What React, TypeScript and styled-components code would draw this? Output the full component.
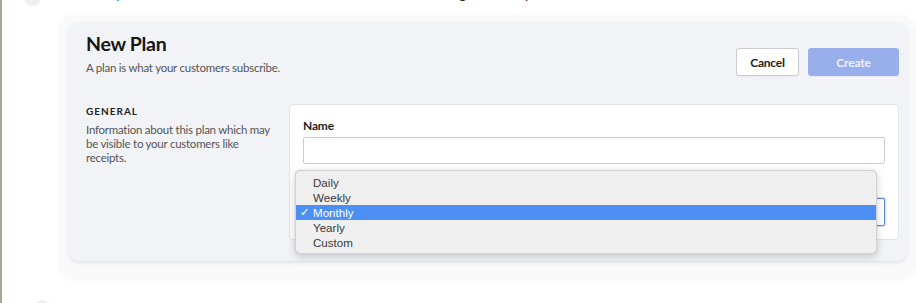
import React from "react";
import styled, { createGlobalStyle } from "styled-components";

const Global = createGlobalStyle`
  html, body { margin: 0; padding: 0; background: #ffffff; overflow: hidden; }
  body { font-family: Lato, "Liberation Sans", Arial, sans-serif; }
  * { box-sizing: border-box; }
`;

const Page = styled.div`
  height: 303px;
  border-left: 2px solid #ada59b;
  overflow: hidden;
`;

const TopRow = styled.div`
  display: flex;
  align-items: flex-start;
  height: 6px;
  overflow: hidden;
`;

const Bullet = styled.div<{ $offset: number }>`
  flex-shrink: 0;
  width: 17px;
  height: 17px;
  border-radius: 50%;
  background: #efefef;
  margin-left: ${(p) => p.$offset}px;
`;

const TopBullet = styled(Bullet)`
  margin-top: -11px;
`;

const BottomBullet = styled(Bullet)`
  margin-top: 20px;
`;

const TopText = styled.div`
  margin-left: 37px;
  margin-top: -13.4px;
  font-size: 14px;
  line-height: 14px;
  white-space: nowrap;
  color: #222;
`;

const TopLink = styled.span`
  color: #1a5fd6;
`;

const Frame = styled.div`
  margin: 9px 0 0 56px;
  padding: 7px 8px 19px 10px;
  border-radius: 16px;
  background: #f9f9f9;
  box-shadow: 0 0 6px 2px rgba(0, 0, 0, 0.015);
`;

const Card = styled.div`
  width: 840px;
  height: 239px;
  padding: 10px 9px 21px 18px;
  border-radius: 10px;
  background: #f1f3f6;
  box-shadow: 0 3px 3px rgba(0, 0, 0, 0.05), 0 1px 1px rgba(0, 0, 0, 0.03);
`;

const Header = styled.div`
  display: flex;
  justify-content: space-between;
  align-items: flex-end;
`;

const TitleBlock = styled.div`
  display: flex;
  flex-direction: column;
  gap: 4px;
`;

const Title = styled.h1`
  margin: 0;
  font-size: 19.5px;
  line-height: 24px;
  letter-spacing: -0.3px;
  font-weight: 700;
  color: #161616;
`;

const Subtitle = styled.p`
  margin: 0;
  font-size: 11.5px;
  line-height: 16px;
  letter-spacing: -0.25px;
  color: #555;
`;

const Actions = styled.div`
  display: flex;
  gap: 9px;
`;

const Button = styled.button<{ $primary?: boolean }>`
  height: 28px;
  padding: 0;
  width: ${(p) => (p.$primary ? 91 : 63)}px;
  border-radius: 3px;
  font-family: Lato, "Liberation Sans", sans-serif;
  font-size: 12px;
  letter-spacing: -0.2px;
  font-weight: 700;
  cursor: pointer;
  border: 1px solid ${(p) => (p.$primary ? "#98afeb" : "#c9cbcf")};
  background: ${(p) => (p.$primary ? "#98afeb" : "#ffffff")};
  color: ${(p) => (p.$primary ? "#edf1fc" : "#222")};
  box-shadow: 0 1px 1px rgba(0, 0, 0, 0.04);
`;

const Section = styled.div`
  display: flex;
  gap: 13px;
  margin-top: 28px;
`;

const Aside = styled.div`
  width: 190px;
  flex-shrink: 0;
`;

const SectionLabel = styled.div`
  font-size: 10px;
  line-height: 14px;
  font-weight: 700;
  letter-spacing: 1px;
  color: #222;
`;

const SectionText = styled.p`
  margin: 5px 0 0;
  font-size: 11.5px;
  line-height: 14px;
  letter-spacing: -0.25px;
  color: #555;
`;

const Panel = styled.div`
  width: 610px;
  padding: 13px;
  border: 1px solid #e2e5e9;
  border-radius: 4px;
  background: #ffffff;
  display: flex;
  flex-direction: column;
  gap: 14px;
`;

const Field = styled.div`
  display: flex;
  flex-direction: column;
`;

const Label = styled.label`
  font-size: 12px;
  line-height: 16px;
  letter-spacing: -0.2px;
  font-weight: 700;
  color: #1e1e1e;
`;

const Input = styled.input`
  margin-top: 3px;
  height: 27px;
  border: 1px solid #c9cbcf;
  border-radius: 2px;
  padding: 0 8px;
  font-family: Lato, sans-serif;
  font-size: 12px;
  outline: none;
`;

const SelectWrap = styled.div`
  position: relative;
  margin-top: 4px;
`;

const SelectBox = styled.div`
  height: 28px;
  border: 1px solid #5c86e4;
  border-radius: 2px;
  box-shadow: 0 0 0 1px rgba(92, 134, 228, 0.25);
  background: #fff;
`;

const Menu = styled.ul`
  position: absolute;
  top: -28px;
  left: -8px;
  right: 8px;
  margin: 0;
  padding: 4px 0 3px;
  list-style: none;
  background: #efefef;
  border: 0.5px solid #d2d2d2;
  border-radius: 5px;
  box-shadow: 0 3px 8px rgba(0, 0, 0, 0.18), 0 0 1px rgba(0, 0, 0, 0.2);
  font-family: "Liberation Sans", Arial, "DejaVu Sans", sans-serif;
  font-size: 11.6px;
`;

const Option = styled.li<{ $selected?: boolean }>`
  display: flex;
  align-items: center;
  height: 15px;
  line-height: 15px;
  background: ${(p) => (p.$selected ? "#4c8ff5" : "transparent")};
  color: ${(p) => (p.$selected ? "#ffffff" : "#3a3a3a")};
`;

const Check = styled.span`
  width: 17px;
  padding-left: 4px;
  font-family: "DejaVu Sans", sans-serif;
  font-size: 11.5px;
`;

const options = ["Daily", "Weekly", "Monthly", "Yearly", "Custom"];

export default function App() {
  return (
    <>
      <Global />
      <Page>
        <TopRow>
          <TopBullet $offset={22} />
          <TopText>
            Go to <TopLink>plans</TopLink> to add a new one and then all the details of a billin
            <span>g</span> and the r<span>p</span>
          </TopText>
        </TopRow>
        <Frame>
          <Card>
            <Header>
              <TitleBlock>
                <Title>New Plan</Title>
                <Subtitle>A plan is what your customers subscribe.</Subtitle>
              </TitleBlock>
              <Actions>
                <Button>Cancel</Button>
                <Button $primary>Create</Button>
              </Actions>
            </Header>
            <Section>
              <Aside>
                <SectionLabel>GENERAL</SectionLabel>
                <SectionText>
                  Information about this plan which may be visible to your customers like receipts.
                </SectionText>
              </Aside>
              <Panel>
                <Field>
                  <Label>Name</Label>
                  <Input />
                </Field>
                <Field>
                  <Label>Billing Period</Label>
                  <SelectWrap>
                    <SelectBox />
                    <Menu>
                      {options.map((o) => (
                        <Option key={o} $selected={o === "Monthly"}>
                          <Check>{o === "Monthly" ? "✓" : ""}</Check>
                          {o}
                        </Option>
                      ))}
                    </Menu>
                  </SelectWrap>
                </Field>
              </Panel>
            </Section>
          </Card>
        </Frame>
        <BottomBullet $offset={32} />
      </Page>
    </>
  );
}
